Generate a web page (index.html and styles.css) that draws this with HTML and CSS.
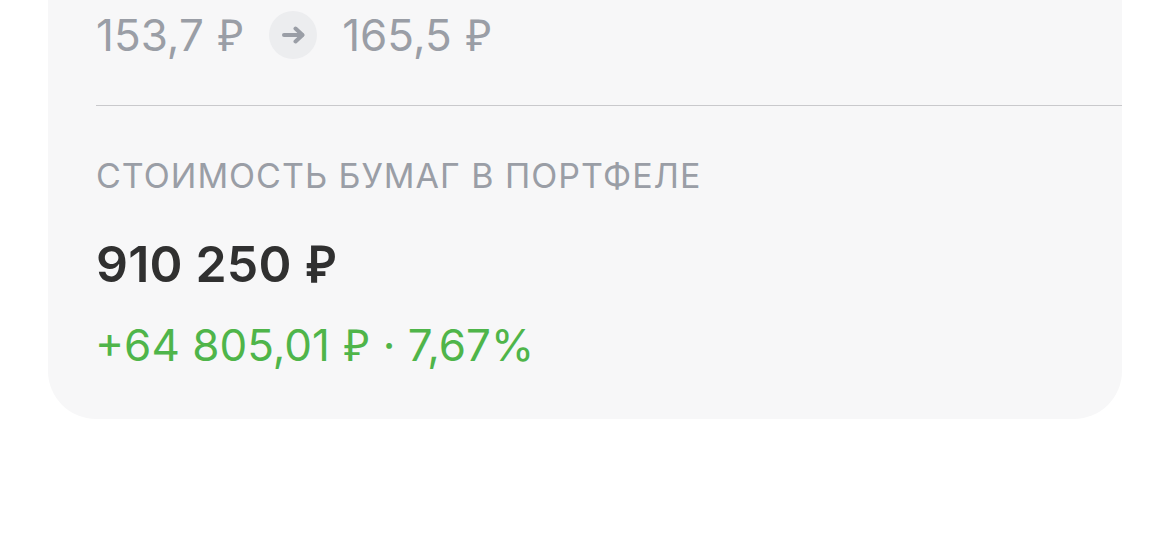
FILE: index.html
```html
<!DOCTYPE html>
<html lang="ru">
<head>
    <meta charset="UTF-8">
    <meta name="viewport" content="width=device-width, initial-scale=1.0">
    <title>Стоимость бумаг в портфеле</title>
    <link rel="stylesheet" href="styles.css">
</head>
<body>
    <div class="card">
        <div class="price-row">
            <span class="price">153,7 <span class="rub">₽</span></span>
            <span class="arrow-badge">
                <svg width="24" height="20" viewBox="0 0 24 20" fill="none" stroke="#9a9ea6" stroke-width="4" stroke-linecap="round" stroke-linejoin="round">
                    <path d="M3 10H21"/>
                    <path d="M14.5 3.5L21.5 10L14.5 16.5"/>
                </svg>
            </span>
            <span class="price">165,5 <span class="rub">₽</span></span>
        </div>
        <div class="divider"></div>
        <div class="label">СТОИМОСТЬ БУМАГ В ПОРТФЕЛЕ</div>
        <div class="total">910 250 <span class="rub">₽</span></div>
        <div class="change">+64 805,01 <span class="rub">₽</span> · 7,67%</div>
    </div>
</body>
</html>
```

FILE: styles.css
```css
/* styles.css */
body {
    font-family: Inter, "Noto Sans", sans-serif;
    background-color: #fff;
    margin: 0;
    padding: 0 48px 0 48px;
    height: 540px;
    overflow: hidden;
}

.card {
    background-color: #f7f7f8;
    border-radius: 0 0 48px 48px;
    height: 419px;
    padding: 11px 0 0 48px;
    box-sizing: border-box;
}

.price-row {
    display: flex;
    align-items: center;
    gap: 25px;
    height: 48px;
}

.price {
    font-size: 44px;
    color: #9a9ea6;
    padding-bottom: 3px;
}

/* the ruble sign is narrower and set a little apart from the digits */
.rub {
    font-family: "Liberation Sans", sans-serif;
    margin-left: 2px;
}

.arrow-badge {
    width: 48px;
    height: 48px;
    border-radius: 50%;
    background-color: #ecedef;
    display: flex;
    align-items: center;
    justify-content: center;
}

.divider {
    height: 1px;
    background-color: #c9c9cc;
    margin-top: 46px;
}

.label {
    font-size: 34px;
    line-height: 40px;
    color: #9a9ea6;
    margin-top: 50px;
    letter-spacing: 1px;
}

.total {
    font-size: 50px;
    line-height: 58px;
    font-weight: 600;
    color: #303030;
    margin-top: 39px;
    letter-spacing: 0.2px;
}

.change {
    font-size: 44px;
    line-height: 54px;
    color: #4fb54a;
    margin-top: 24px;
    margin-left: -1px;
}
```
